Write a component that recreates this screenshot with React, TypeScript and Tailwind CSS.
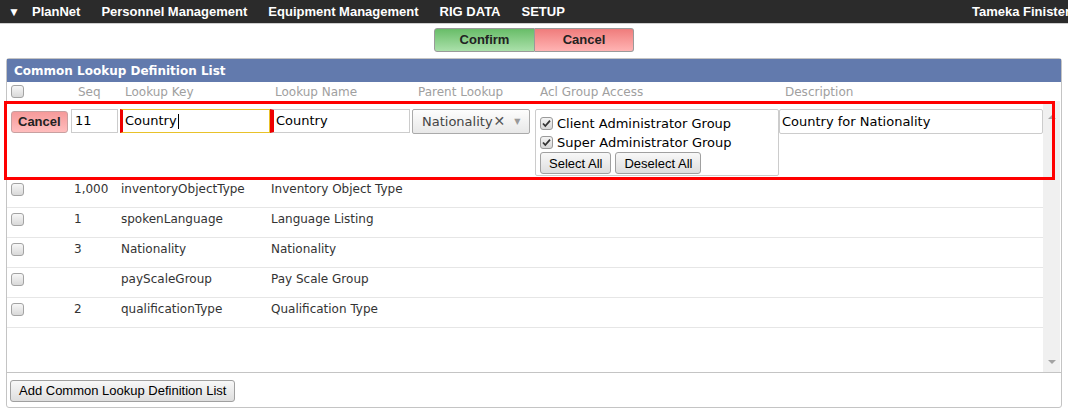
import React from 'react';

const cols = "grid grid-cols-[64px_49px_150px_142px_123px_244px_1fr]";

const rows = [
    { seq: "1,000", key: "inventoryObjectType", name: "Inventory Object Type" },
    { seq: "1", key: "spokenLanguage", name: "Language Listing" },
    { seq: "3", key: "Nationality", name: "Nationality" },
    { seq: "", key: "payScaleGroup", name: "Pay Scale Group" },
    { seq: "2", key: "qualificationType", name: "Qualification Type" },
];

const Box = () => (
    <div className="w-[13px] h-[13px] rounded-[3px] border border-[#a3a3a3] bg-gradient-to-b from-[#f7f7f7] to-[#d9d9d9]" />
);

const Checked = () => (
    <svg width="13" height="13" viewBox="0 0 13 13" className="shrink-0">
        <defs>
            <linearGradient id="cg" x1="0" y1="0" x2="0" y2="1">
                <stop offset="0" stopColor="#f5f5f5" />
                <stop offset="1" stopColor="#d6d6d6" />
            </linearGradient>
        </defs>
        <rect x="0.5" y="0.5" width="12" height="12" rx="2.5" fill="url(#cg)" stroke="#9a9a9a" />
        <path d="M3 6.5 L5.3 9 L10 3.6" fill="none" stroke="#333" strokeWidth="1.8" />
    </svg>
);

const GrayButton = ({ children, className = "" }: { children: React.ReactNode; className?: string }) => (
    <button className={`h-[22px] px-[8px] whitespace-nowrap rounded-[3px] border border-[#a0a0a0] bg-gradient-to-b from-[#f8f8f8] to-[#dedede] text-[13px] text-black font-['Liberation_Sans',Arial,sans-serif] leading-none ${className}`}>
        {children}
    </button>
);

export default function App() {
    return (
        <div className="w-[1068px] h-[413px] overflow-hidden bg-white font-['DejaVu_Sans',Verdana,sans-serif]">
            {/* top nav */}
            <nav className="h-[24px] bg-[#2b2b2b] border-b border-[#cfcfcf] flex items-center text-white text-[13px] font-bold font-['Liberation_Sans',Arial,sans-serif] whitespace-nowrap">
                <span className="ml-[8px] w-[24px] text-[12px]">▼</span>
                <div className="flex items-center gap-[21px]">
                    <span>PlanNet</span>
                    <span>Personnel Management</span>
                    <span>Equipment Management</span>
                    <span>RIG DATA</span>
                    <span>SETUP</span>
                </div>
                <span className="ml-auto mr-[-2px]">Tameka Finister</span>
            </nav>

            {/* confirm / cancel */}
            <div className="flex justify-center mt-[4px] font-['Liberation_Sans',Arial,sans-serif] text-[13px] font-bold text-[#222]">
                <button className="w-[101px] h-[24px] rounded-l-[3px] border border-[#9a9a9a] bg-gradient-to-b from-[#68bd68] to-[#aae0aa]">
                    Confirm
                </button>
                <button className="w-[99px] h-[24px] rounded-r-[3px] border border-l-0 border-[#9a9a9a] bg-gradient-to-b from-[#ef7c7c] to-[#ffb3b3]">
                    Cancel
                </button>
            </div>

            {/* panel */}
            <div className="mx-[6px] mt-[6px] border border-[#c4c4c4] rounded-[3px]">
                <div className="h-[23px] bg-[#627aad] flex items-center pl-[7px] text-white text-[12px] font-bold">
                    Common Lookup Definition List
                </div>

                <div className={`${cols} h-[19px] items-center text-[12px] text-[#a0a0a0] pr-[16px]`}>
                    <div className="pl-[4px]"><Box /></div>
                    <div className="pl-[7px]">Seq</div>
                    <div className="pl-[5px]">Lookup Key</div>
                    <div className="pl-[5px]">Lookup Name</div>
                    <div className="pl-[6px]">Parent Lookup</div>
                    <div className="pl-[5px]">Acl Group Access</div>
                    <div className="pl-[6px]">Description</div>
                </div>

                {/* body */}
                <div className="relative h-[272px] flex border-b border-[#c4c4c4]">
                    <div className="flex-1 text-[12px] text-[#333]">
                        {/* edit row */}
                        <div className={`${cols} h-[77px] items-start pt-[8px]`}>
                            <div className="pl-[4px] pt-[2px]">
                                <button className="h-[22px] px-[6px] rounded-[3px] border border-[#c8a0a0] bg-gradient-to-b from-[#f59a9a] to-[#ffbdbd] text-[13px] font-bold text-[#222] font-['Liberation_Sans',Arial,sans-serif]">
                                    Cancel
                                </button>
                            </div>
                            <div>
                                <div className="w-[47px] h-[24px] border border-[#ccc] flex items-center pl-[3px] text-[13px] text-black">11</div>
                            </div>
                            <div>
                                <div className="w-[150px] h-[24px] border border-[#e8c22a] border-l-[3px] border-l-[#e00] flex items-center pl-[2px] text-[13px] text-black">
                                    Country<span className="w-px h-[15px] bg-black ml-px" />
                                </div>
                            </div>
                            <div>
                                <div className="w-[140px] h-[24px] border border-[#ccc] border-l-[4px] border-l-[#e00] flex items-center pl-[2px] text-[13px] text-black">
                                    Country
                                </div>
                            </div>
                            <div>
                                <div className="w-[118px] h-[25px] rounded-[2px] border border-[#aaa] bg-gradient-to-b from-[#fdfdfd] to-[#e8e8e8] flex items-center pl-[9px] text-[13px] text-[#444]">
                                    <span>Nationality</span>
                                    <span className="text-[#555] text-[14px] font-bold ml-px">✕</span>
                                    <span className="ml-[9px] text-[8px] text-[#999]">▼</span>
                                </div>
                            </div>
                            <div>
                                <div className="w-[244px] h-[67px] border border-[#ccc] rounded-[2px] pl-[4px] pt-[4px] text-[13px] text-black">
                                    <div className="flex items-center gap-[4px] h-[19px]"><Checked />Client Administrator Group</div>
                                    <div className="flex items-center gap-[4px] h-[19px]"><Checked />Super Administrator Group</div>
                                    <div className="flex gap-[4px]">
                                        <GrayButton>Select All</GrayButton>
                                        <GrayButton>Deselect All</GrayButton>
                                    </div>
                                </div>
                            </div>
                            <div>
                                <div className="w-[264px] h-[25px] border border-[#ccc] rounded-[2px] flex items-center pl-[2px] text-[13px] text-black">
                                    Country for Nationality
                                </div>
                            </div>
                        </div>

                        {rows.map((r) => (
                            <div key={r.key} className={`${cols} h-[30px] items-start pt-[4px] leading-[14px] border-b border-[#e6e6e6]`}>
                                <div className="pl-[4px] pt-[1px]"><Box /></div>
                                <div className="pl-[3px]">{r.seq}</div>
                                <div className="pl-[1px]">{r.key}</div>
                                <div className="pl-[1px]">{r.name}</div>
                                <div />
                                <div />
                                <div />
                            </div>
                        ))}
                    </div>

                    {/* scrollbar */}
                    <div className="w-[17px] bg-[#f0f0f0] flex flex-col justify-between items-center pt-[14px] pb-[8px] mr-px">
                        <div className="w-0 h-0 border-x-[4px] border-x-transparent border-b-[4px] border-b-[#a3a3a3]" />
                        <div className="w-0 h-0 border-x-[4px] border-x-transparent border-t-[4px] border-t-[#a3a3a3]" />
                    </div>

                    {/* annotation */}
                    <div className="absolute left-[-3px] top-0 w-[1051px] h-[79px] border-[3px] border-[#f00] pointer-events-none" />
                </div>

                <div className="pt-[5px] pb-[5px] pl-[3px]">
                    <GrayButton className="w-[225px]">Add Common Lookup Definition List</GrayButton>
                </div>
            </div>
        </div>
    );
}
